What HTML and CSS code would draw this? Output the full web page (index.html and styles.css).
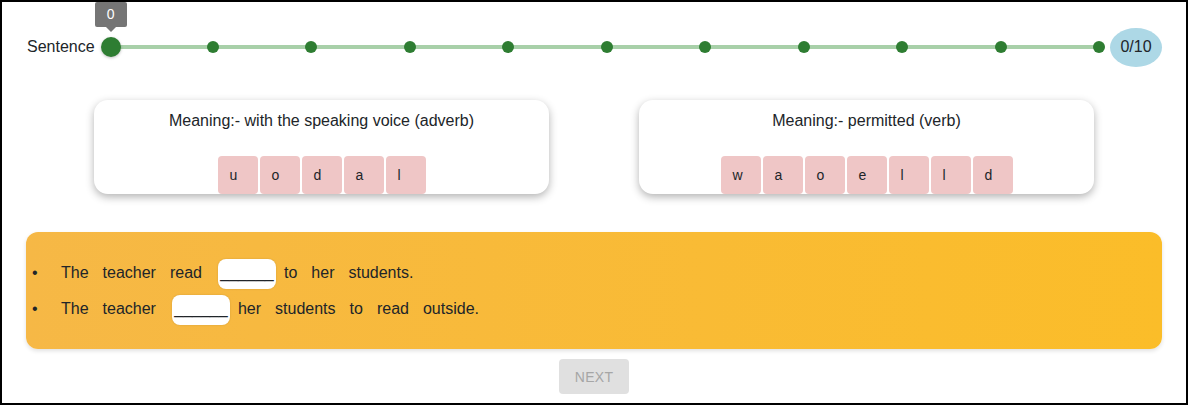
FILE: index.html
```html
<!DOCTYPE html>
<html>
<head>
<meta charset="utf-8">
<link rel="stylesheet" href="styles.css">
</head>
<body>
<div class="frame">
  <div class="progress-row">
    <span class="label">Sentence</span>
    <div class="slider">
      <div class="track"></div>
      <div class="dot dot-active"><span class="tip">0</span></div>
      <div class="dot"></div>
      <div class="dot"></div>
      <div class="dot"></div>
      <div class="dot"></div>
      <div class="dot"></div>
      <div class="dot"></div>
      <div class="dot"></div>
      <div class="dot"></div>
      <div class="dot"></div>
      <div class="dot"></div>
    </div>
    <div class="badge">0/10</div>
  </div>

  <div class="cards">
    <div class="card">
      <div class="meaning">Meaning:- with the speaking voice (adverb)</div>
      <div class="tiles">
        <span class="tile">u</span><span class="tile">o</span><span class="tile">d</span><span class="tile">a</span><span class="tile">l</span>
      </div>
    </div>
    <div class="card">
      <div class="meaning">Meaning:- permitted (verb)</div>
      <div class="tiles">
        <span class="tile">w</span><span class="tile">a</span><span class="tile">o</span><span class="tile">e</span><span class="tile">l</span><span class="tile">l</span><span class="tile">d</span>
      </div>
    </div>
  </div>

  <div class="sentences">
    <ul class="list">
      <li><span class="w">The</span><span class="w">teacher</span><span class="w">read</span><span class="blank">______</span><span class="w">to</span><span class="w">her</span><span class="w">students.</span></li>
      <li><span class="w">The</span><span class="w">teacher</span><span class="blank">______</span><span class="w">her</span><span class="w">students</span><span class="w">to</span><span class="w">read</span><span class="w">outside.</span></li>
    </ul>
  </div>

  <div class="actions">
    <button class="next" disabled>NEXT</button>
  </div>
</div>
</body>
</html>
```

FILE: styles.css
```css
* { box-sizing: border-box; }
html, body { margin: 0; padding: 0; background: #fff; }
body { font-family: "Liberation Sans", Arial, sans-serif; color: #212529; }

.frame {
  width: 1188px;
  height: 405px;
  border: 2px solid #000;
  overflow: hidden;
}

.progress-row {
  display: flex;
  align-items: center;
  margin: 25px 24px 0 25px;
  height: 40px;
}
.label { font-size: 16px; margin-right: 6px; }

.slider {
  position: relative;
  flex: 1;
  height: 20px;
  display: flex;
  align-items: center;
  justify-content: space-between;
  margin-right: 5px;
}
.track {
  position: absolute;
  left: 10px;
  right: 6px;
  top: 8px;
  height: 4px;
  background: #a8d0a9;
}
.dot {
  position: relative;
  width: 12px;
  height: 12px;
  border-radius: 50%;
  background: #2e7d32;
}
.dot-active {
  width: 20px;
  height: 20px;
  box-shadow: 0 1px 3px rgba(0,0,0,.25);
}
.tip {
  position: absolute;
  left: -6px;
  top: -35px;
  width: 32px;
  height: 25px;
  background: #757575;
  color: #fff;
  font-size: 14px;
  line-height: 25px;
  text-align: center;
  border-radius: 2px;
}
.tip::after {
  content: "";
  position: absolute;
  left: 11px;
  bottom: -5px;
  border-left: 5px solid transparent;
  border-right: 5px solid transparent;
  border-top: 5px solid #757575;
}
.badge {
  width: 52px;
  height: 39px;
  border-radius: 50%;
  background: #add8e6;
  font-size: 16px;
  display: flex;
  align-items: center;
  justify-content: center;
}

.cards {
  display: flex;
  justify-content: center;
  gap: 90px;
  margin-top: 33px;
}
.card {
  width: 455px;
  height: 94px;
  background: #fff;
  border-radius: 14px;
  box-shadow: 0 3px 8px rgba(0,0,0,.3);
  padding-top: 11px;
  display: flex;
  flex-direction: column;
  align-items: center;
}
.meaning { font-size: 16px; line-height: 19px; }
.tiles { display: flex; gap: 2px; margin-top: auto; }
.tile {
  width: 40px;
  height: 38px;
  background: #efc6c6;
  border-radius: 4px;
  font-size: 14px;
  line-height: 38px;
  padding-left: 12px;
}

.sentences {
  margin: 38px 24px 0 24px;
  height: 117px;
  border-radius: 12px;
  background: linear-gradient(90deg, #f6b846 0%, #fbbd29 100%);
  box-shadow: 0 2px 4px rgba(0,0,0,.12);
  padding: 23px 0 0 0;
}
.list {
  margin: 0;
  padding-left: 6px;
  font-size: 16px;
  line-height: 36px;
  list-style: none;
}
.list li { height: 36px; }
.list li::before {
  content: "\2022";
  display: inline-block;
  width: 29px;
}
.w { margin-right: 14px; }
.blank {
  display: inline-block;
  vertical-align: middle;
  width: 58px;
  height: 30px;
  margin: 0 8px 0 2px;
  background: #fff;
  border-radius: 8px;
  box-shadow: 0 0 2px rgba(0,0,0,.15);
  text-align: center;
  line-height: 28px;
  color: #212529;
}

.actions { display: flex; justify-content: center; margin-top: 10px; }
.next {
  width: 70px;
  height: 35px;
  border: none;
  border-radius: 4px;
  background: #e0e0e0;
  color: #a6a6a6;
  font-family: "Liberation Sans", Arial, sans-serif;
  font-size: 14px;
  letter-spacing: .3px;
}
```
